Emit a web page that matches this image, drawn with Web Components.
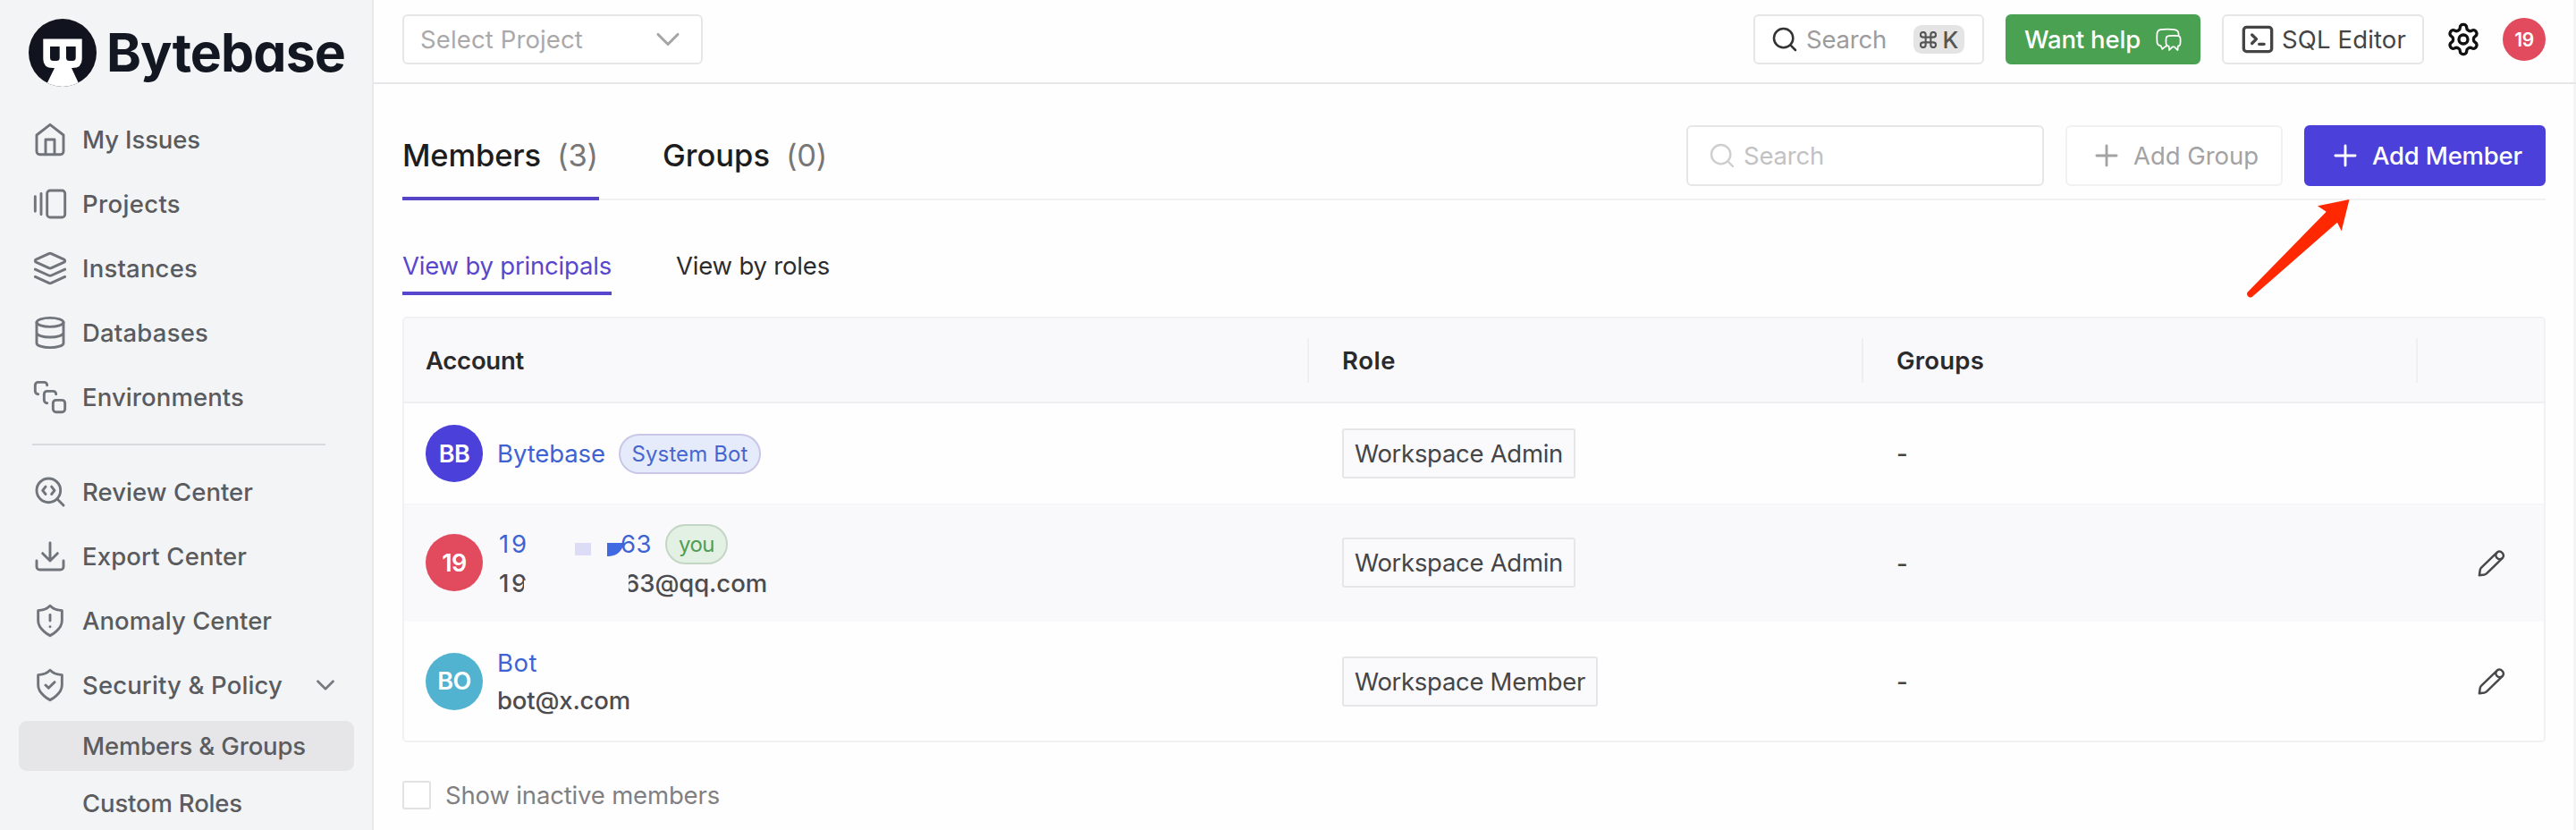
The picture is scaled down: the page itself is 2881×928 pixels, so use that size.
<!DOCTYPE html>
<html lang="en">
<head>
<meta charset="utf-8">
<title>Bytebase - Members &amp; Groups</title>
<style>
  html, body { margin: 0; padding: 0; }
  body { width: 2881px; height: 928px; overflow: hidden; background: #fefefe; font-family: Inter, "Liberation Sans", sans-serif; font-size: 27.5px; font-weight: 430; color: #333; }
</style>
</head>
<body>
<bb-app></bb-app>
<script>
const ICONS = {
  home: '<path d="m3 9 9-7 9 7v11a2 2 0 0 1-2 2H5a2 2 0 0 1-2-2z"/><path d="M9 22V12h6v10"/>',
  projects: '<path d="M2 7v10M6 5v14"/><rect width="12" height="18" x="10" y="3" rx="2"/>',
  layers: '<path d="M12.83 2.18a2 2 0 0 0-1.66 0L2.6 6.08a1 1 0 0 0 0 1.83l8.58 3.91a2 2 0 0 0 1.66 0l8.58-3.9a1 1 0 0 0 0-1.83Z"/><path d="m22 12.65-9.17 4.16a2 2 0 0 1-1.66 0L2 12.65M22 17.65l-9.17 4.16a2 2 0 0 1-1.66 0L2 17.65"/>',
  database: '<ellipse cx="12" cy="5" rx="9" ry="3"/><path d="M3 5V19A9 3 0 0 0 21 19V5M3 12A9 3 0 0 0 21 12"/>',
  stack: '<path d="M4 10c-1.1 0-2-.9-2-2V4c0-1.1.9-2 2-2h4c1.1 0 2 .9 2 2M10 16c-1.1 0-2-.9-2-2v-4c0-1.1.9-2 2-2h4c1.1 0 2 .9 2 2"/><rect width="8" height="8" x="14" y="14" rx="2"/>',
  review: '<path d="m13 13.5 2-2.5-2-2.5M21 21l-4.3-4.3M9 8.5 7 11l2 2.5"/><circle cx="11" cy="11" r="8"/>',
  download: '<path d="M21 15v4a2 2 0 0 1-2 2H5a2 2 0 0 1-2-2v-4M7 10l5 5 5-5M12 15V3"/>',
  anomaly: '<path d="M12 22s8-4 8-10V5.2l-1-.2c-2.6 0-5.200-1.200-7-3-1.800 1.800-4.400 3-7 3l-1 .2V12c0 6 8 10 8 10M12 8v4M12 16h.01"/>',
  shield: '<path d="M12 22s8-4 8-10V5.2l-1-.2c-2.6 0-5.200-1.200-7-3-1.800 1.800-4.400 3-7 3l-1 .2V12c0 6 8 10 8 10M9 12l2 2 4-4"/>',
  chevron: '<path d="m6 9 6 6 6-6"/>',
  search: '<circle cx="11" cy="11" r="8"/><path d="m21 21-4.200-4.200"/>',
  plus: '<path d="M5 12h14M12 5v14"/>',
  gear: '<path d="M12.22 2h-.44a2 2 0 0 0-2 2v.18a2 2 0 0 1-1 1.73l-.43.25a2 2 0 0 1-2 0l-.15-.08a2 2 0 0 0-2.73.73l-.22.38a2 2 0 0 0 .73 2.73l.15.1a2 2 0 0 1 1 1.72v.51a2 2 0 0 1-1 1.74l-.15.09a2 2 0 0 0-.73 2.73l.22.38a2 2 0 0 0 2.73.73l.15-.08a2 2 0 0 1 2 0l.43.25a2 2 0 0 1 1 1.73V20a2 2 0 0 0 2 2h.44a2 2 0 0 0 2-2v-.18a2 2 0 0 1 1-1.73l.43-.25a2 2 0 0 1 2 0l.15.08a2 2 0 0 0 2.73-.73l.22-.39a2 2 0 0 0-.73-2.73l-.15-.08a2 2 0 0 1-1-1.74v-.5a2 2 0 0 1 1-1.74l.15-.09a2 2 0 0 0 .73-2.73l-.22-.38a2 2 0 0 0-2.73-.73l-.15.08a2 2 0 0 1-2 0l-.43-.25a2 2 0 0 1-1-1.73V4a2 2 0 0 0-2-2z"/><circle cx="12" cy="12" r="3"/>',
  terminal: '<rect x="2.6" y="3.800" width="18.800" height="16.400" rx="2"/><path d="m8.200 9 2.900 2.800-2.900 2.900M13 15.200h3.300"/>',
  chat: '<g transform="translate(0 1.200) scale(.8333)" stroke-width="1.700"><path d="M5.500 19.500H5.200Q1.800 18.800 1.500 15.800Q1 10.500 1.500 5.700Q2 2.300 5.400 1.700Q13 .6 20.600 1.700Q24.800 2.300 25.200 5.500L25.500 7.600M5.500 19.500 7.300 23.300 10.800 20.300H11.500"/><path d="M14.300 8.600Q19.500 8 24.700 8.600Q27.200 9 27.300 11.300Q27.600 14.500 27.200 17.500Q26.800 19.900 24.600 20.100L24.400 24.400 20.600 20.700H18.600L15 24.400 14.600 20.100Q11.900 19.900 11.500 17.500Q11.200 14.500 11.500 11.300Q11.700 9 14.300 8.600Z"/></g>',
  pencil: '<g transform="scale(.8)" stroke-width="2.400"><path d="M1.800 28.300 2.700 22.300Q3 21 4 20L21.300 3.200A4.400 4.400 0 0 1 27.300 9.200L9.800 26.300Q8.800 27.200 7.500 27.500ZM21 3.800A3.600 3.600 0 0 0 26.800 9.600"/></g>'
};

function define(name, css, html, after) {
  const tpl = document.createElement('template');
  tpl.innerHTML = `<style>:host{box-sizing:border-box}*{box-sizing:border-box}${css}</style>${html}`;
  customElements.define(name, class extends HTMLElement {
    connectedCallback() {
      if (this.shadowRoot) return;
      this.attachShadow({ mode: 'open' }).appendChild(tpl.content.cloneNode(true));
      if (after) after.call(this, this.shadowRoot);
    }
  });
}

/* Stroked icon: name, size (px), stroke (24-unit grid) */
define('bb-icon', ':host{display:block;flex:none;line-height:0}svg{display:block;fill:none;stroke:currentColor;stroke-linecap:round;stroke-linejoin:round;overflow:visible}',
  '<svg viewBox="0 0 24 24"></svg>', function (root) {
    const s = root.querySelector('svg'), size = this.getAttribute('size') || 40;
    s.setAttribute('width', size); s.setAttribute('height', size);
    s.setAttribute('stroke-width', this.getAttribute('stroke') || 1.5);
    s.innerHTML = ICONS[this.getAttribute('name')];
  });

/* Single line of text tracked to an exact advance width */
define('bb-text', ':host{display:block;flex:none;white-space:pre}span{display:inline-block}', '<span><slot></slot></span>', function (root) {
  const want = +this.getAttribute('w'), span = root.querySelector('span');
  if (!want) return;
  this.style.width = want + 'px';
  const n = this.textContent.length;
  this.style.letterSpacing = ((want - span.getBoundingClientRect().width) / n).toFixed(3) + 'px';
});

define('bb-avatar', ':host{display:flex;flex:none;align-items:center;justify-content:center;width:64px;height:64px;border-radius:50%;color:#fff;font-size:27px;font-weight:600;letter-spacing:-.5px}:host([small]){width:48px;height:48px;font-size:21px}', '<slot></slot>');

define('bb-logo', ':host{display:flex;align-items:center;height:120px;padding:0 0 3px 31px}svg{display:block;flex:none;margin-right:10px}bb-text{font-size:59px;line-height:76px;font-weight:700;color:#131722;font-feature-settings:"cv11"}',
  `<svg width="78" height="78" viewBox="31 20.5 78 78"><defs><clipPath id="c"><circle cx="70" cy="59.5" r="38"/></clipPath></defs>
   <circle cx="70" cy="59.5" r="38" fill="#11141f"/>
   <g clip-path="url(#c)"><path fill="#fff" d="M48.300 44H91.700V66.500Q91.700 76.500 81 76.500H80L90 98H50.500L61 76.500H59Q48.300 76.500 48.300 66.500Z"/></g>
   <path fill="#11141f" d="M56 52.500h10.700v12.500q0 3.500-3.500 3.500h-3.700q-3.500 0-3.500-3.500zM74 52.500h10.700v12.500q0 3.500-3.500 3.500h-3.700q-3.500 0-3.500-3.500z"/></svg>
   <bb-text w="267">Bytebase</bb-text>`);

define('bb-nav-item', ':host{display:flex;align-items:center;height:72px;padding-left:36px;font-weight:530;color:#5a5b5e}bb-icon{color:#70747b;margin-right:16px}slot[name=end]{display:block}',
  '<bb-icon size="40"></bb-icon><slot></slot><slot name="end"></slot>', function (root) {
    const old = root.querySelector('bb-icon'), ic = document.createElement('bb-icon');
    ic.setAttribute('name', this.getAttribute('icon')); ic.setAttribute('stroke', '1.75');
    old.replaceWith(ic);
  });
define('bb-sub-item', ':host{display:flex;align-items:center;height:56px;margin:4px 20px 0 21px;padding-left:71px;border-radius:9px;color:#5c5c5f;font-weight:470}:host([active]){background:#e6e6e8}:host(:not([active])){margin-top:8px}', '<slot></slot>');

define('bb-sidebar', ':host{display:block;width:418px;height:928px;flex:none;background:#f3f4f6;border-right:2px solid #e8e9ec;overflow:hidden}hr{border:0;height:2px;margin:16px 52px 16px 36px;background:#d9dadd}.chev{margin-left:31px;color:#77797e}',
  `<bb-logo></bb-logo>
  <bb-nav-item icon="home"><bb-text w="132">My Issues</bb-text></bb-nav-item>
  <bb-nav-item icon="projects"><bb-text w="110">Projects</bb-text></bb-nav-item>
  <bb-nav-item icon="layers"><bb-text w="129">Instances</bb-text></bb-nav-item>
  <bb-nav-item icon="database"><bb-text w="141">Databases</bb-text></bb-nav-item>
  <bb-nav-item icon="stack"><bb-text w="181">Environments</bb-text></bb-nav-item>
  <hr>
  <bb-nav-item icon="review"><bb-text w="191">Review Center</bb-text></bb-nav-item>
  <bb-nav-item icon="download"><bb-text w="184">Export Center</bb-text></bb-nav-item>
  <bb-nav-item icon="anomaly"><bb-text w="212">Anomaly Center</bb-text></bb-nav-item>
  <bb-nav-item icon="shield"><bb-text w="224">Security &amp; Policy</bb-text><bb-icon class="chev" slot="end" name="chevron" size="34" stroke="1.9"></bb-icon></bb-nav-item>
  <bb-sub-item active><bb-text w="250">Members &amp; Groups</bb-text></bb-sub-item>
  <bb-sub-item><bb-text w="179">Custom Roles</bb-text></bb-sub-item>`);

define('bb-button', ':host{display:flex;flex:none;align-items:center;height:56px;border:2px solid #e6e6e8;border-radius:6px;background:#fff}', '<slot></slot>');

define('bb-topbar', `:host{display:flex;align-items:center;height:94px;padding:0 34px 4px 32px;border-bottom:2px solid #e6e7e9;gap:24px}
  .grow{flex:1}.select{width:336px;padding-left:18px;color:#a9a9ab}.select bb-icon{margin-left:73px;color:#a6a6a8}
  .search{width:258px;padding-left:17px;color:#9c9c9e}.search bb-icon{color:#333;margin-right:8px}
  kbd{display:flex;align-items:center;justify-content:center;width:57px;height:32px;margin-left:30px;border-radius:9px;background:#e4e4e5;color:#555;font:450 26px Inter,sans-serif;gap:7px}kbd svg{display:block}
  .help{width:218px;background:#4aa152;border-color:#4aa152;color:#fff;padding-left:19px;font-weight:500}.help bb-icon{margin-left:17px}
  .sql{width:226px;padding-left:18px;color:#444}.sql bb-icon{margin-right:7px}.gear{color:#111}`,
  `<bb-button class="select"><bb-text w="182">Select Project</bb-text><bb-icon name="chevron" size="44" stroke="1.7"></bb-icon></bb-button>
  <div class="grow"></div>
  <bb-button class="search"><bb-icon name="search" size="32" stroke="1.9"></bb-icon><bb-text w="90">Search</bb-text><kbd><svg width="19" height="19" viewBox="2 2 20 20" fill="none" stroke="currentColor" stroke-width="2.2"><path d="M15 6v12a3 3 0 1 0 3-3H6a3 3 0 1 0 3 3V6a3 3 0 1 0-3 3h12a3 3 0 1 0-3-3"/></svg><span>K</span></kbd></bb-button>
  <bb-button class="help"><bb-text w="130">Want help</bb-text><bb-icon name="chat" size="29"></bb-icon></bb-button>
  <bb-button class="sql"><bb-icon name="terminal" size="40" stroke="2"></bb-icon><bb-text w="139">SQL Editor</bb-text></bb-button>
  <bb-icon class="gear" name="gear" size="40" stroke="2"></bb-icon>
  <bb-avatar small style="background:#e24a5e">19</bb-avatar>`);

define('bb-toolbar', `:host{display:flex;align-items:flex-end;height:130px;margin:0 34px 0 32px;border-bottom:2px solid #f1f1f3}
  .tab{display:flex;align-items:center;height:102px;padding-top:5px;font-size:34.5px;font-weight:540;color:#1d1d20;border-bottom:4px solid transparent;margin-bottom:-2px}
  .tab.on{border-color:#5644c6;width:220px;margin-right:71px}
  .tab bb-text + bb-text{margin-left:18px;font-weight:400;color:#777}
  .grow{flex:1}bb-button{height:68px;margin-bottom:14px}
  .search{width:400px;padding-left:22px;color:#c2c2c4}.search bb-icon{color:#cfcfd1;margin-right:8px}
  .group{width:243px;margin-left:24px;padding-left:25px;border-color:#f1f1f2;color:#a3a3a5}.group bb-icon,.member bb-icon{margin-right:11px}
  .member{width:270px;margin-left:24px;padding-left:25px;background:#4c40db;border-color:#4c40db;color:#fff;font-weight:480}`,
  `<div class="tab on"><bb-text w="155">Members</bb-text><bb-text w="46">(3)</bb-text></div>
  <div class="tab"><bb-text w="120">Groups</bb-text><bb-text w="46">(0)</bb-text></div>
  <div class="grow"></div>
  <bb-button class="search"><bb-icon name="search" size="32" stroke="1.8"></bb-icon><bb-text w="90">Search</bb-text></bb-button>
  <bb-button class="group"><bb-icon name="plus" size="38" stroke="1.8"></bb-icon><bb-text w="140">Add Group</bb-text></bb-button>
  <bb-button class="member"><bb-icon name="plus" size="38" stroke="1.8"></bb-icon><bb-text w="168">Add Member</bb-text></bb-button>`);

define('bb-viewtabs', `:host{display:flex;height:106px;margin:0 32px;gap:72px;color:#2c2c2f}
  .tab{height:106px;display:flex;align-items:flex-end;padding-bottom:10px;border-bottom:4px solid transparent}
  .on{color:#5846cc;border-color:#5846cc}bb-text{line-height:38px}`,
  `<div class="tab on"><bb-text w="234">View by principals</bb-text></div><div class="tab"><bb-text w="172">View by roles</bb-text></div>`);

define('bb-pill', ':host{display:flex;flex:none;align-items:center;justify-content:center;height:45px;border-radius:23px;border:2px solid #c9c6e8;background:#e6ebfb;color:#4667cf;font-size:24px}:host([green]){border-color:#c3d6c4;background:#e3f0e4;color:#509d54}', '<slot></slot>');
define('bb-role', ':host{display:inline-flex;align-items:center;height:56px;padding:0 12px;border:2px solid #e6e6e8;border-radius:3px;background:#fafafc;color:#454548}', '<slot></slot>');

define('bb-row', `:host{display:grid;grid-template-columns:1012px 620px 620px 1fr;height:112px;align-items:center;color:#444;background:#fefefe}
  :host([tall]){height:132px;border-top:2px solid #f6f6f8}:host([shade]){background:#f9f9fb}:host([last]){height:133px}
  .account{display:flex;align-items:center;padding-left:24px}.role,.groups{padding-left:37px;display:flex}.edit{padding-left:67px;color:#48484b}.groups{font-weight:500}`,
  `<div class="account"><slot name="account"></slot></div><div class="role"><slot name="role"></slot></div><div class="groups"><bb-text>-</bb-text></div><div class="edit"><slot name="edit"></slot></div>`);

define('bb-account', `:host{display:flex;align-items:center}.name{display:flex;align-items:center;height:42px;color:#3d63d2}.info{margin-left:16px}`,
  `<slot name="avatar"></slot><div class="info"><div class="name"><slot></slot></div><slot name="mail"></slot></div>`);
define('bb-mail', ':host{display:flex;align-items:center;height:42px;color:#4c4c4f;font-weight:500;position:relative}', '<slot></slot>');

define('bb-table', `:host{display:block;width:2397px;height:476px;margin:24px 0 0 32px;border:2px solid #f1f1f4;border-radius:5px;overflow:hidden}
  .head{display:grid;grid-template-columns:1012px 620px 620px 1fr;height:95px;background:#f9f9fb;border-bottom:2px solid #efeff2;align-items:center;font-weight:570;color:#2a2a2d}
  .head div{height:50px;display:flex;align-items:center;padding-left:37px;border-right:2px solid #efeff2}.head div:first-child{padding-left:24px}.head div:last-child{border:0}
  .chip1{width:18px;height:14px;background:#dcdcf6;margin:12px 18px 0 51px}.chip2{width:18px;height:15px;background:#4169e1;border-radius:0 0 16px 0/0 0 15px 0;margin:12px -3px 0 0}
  .wipe1{position:absolute;left:30px;top:18px;width:9px;height:9px;background:#f9f9fb}.wipe3{position:absolute;left:28px;top:26px;width:9px;height:12px;background:#f9f9fb;transform:skewX(-20deg)}.wipe2{position:absolute;left:134px;top:3px;width:13px;height:38px;background:#f9f9fb}`,
  `<div class="head"><div><bb-text w="110">Account</bb-text></div><div><bb-text w="60">Role</bb-text></div><div><bb-text w="98">Groups</bb-text></div><div></div></div>
  <bb-row>
    <bb-account slot="account"><bb-avatar slot="avatar" style="background:#4c40db">BB</bb-avatar><bb-text w="121">Bytebase</bb-text><bb-pill style="width:159px;margin-left:15px"><bb-text w="130">System Bot</bb-text></bb-pill></bb-account>
    <bb-role slot="role"><bb-text w="233">Workspace Admin</bb-text></bb-role>
  </bb-row>
  <bb-row tall shade>
    <bb-account slot="account" style="margin-top:-2px"><bb-avatar slot="avatar" style="background:#e24a5e">19</bb-avatar><bb-text w="34" style="margin-left:2px">19</bb-text><div class="chip1"></div><div class="chip2"></div><bb-text w="35">63</bb-text><bb-pill green style="width:70px;margin-left:15px"><bb-text w="40">you</bb-text></bb-pill>
      <bb-mail slot="mail" style="top:2px"><bb-text w="34" style="margin-left:2px">19</bb-text><bb-text style="margin-left:106px" w="160">63@qq.com</bb-text><div class="wipe1"></div><div class="wipe3"></div><div class="wipe2"></div></bb-mail></bb-account>
    <bb-role slot="role" style="margin-top:-2px"><bb-text w="233">Workspace Admin</bb-text></bb-role>
    <bb-icon slot="edit" name="pencil" size="31" style="margin-top:-2px"></bb-icon>
  </bb-row>
  <bb-row last>
    <bb-account slot="account"><bb-avatar slot="avatar" style="background:#52b3d0">BO</bb-avatar><bb-text w="45">Bot</bb-text><bb-mail slot="mail"><bb-text w="149">bot@x.com</bb-text></bb-mail></bb-account>
    <bb-role slot="role"><bb-text w="258">Workspace Member</bb-text></bb-role>
    <bb-icon slot="edit" name="pencil" size="31"></bb-icon>
  </bb-row>`);

define('bb-check', ':host{display:flex;align-items:center;gap:16px;margin:43px 0 0 32px;height:32px;color:#808083}.box{width:32px;height:32px;border:2px solid #e2e2e5;border-radius:3px;background:#fff}', '<div class="box"></div><slot></slot>');

define('bb-arrow', ':host{position:absolute;left:2508px;top:218px;width:126px;height:120px}svg{display:block}',
  '<svg width="126" height="120" viewBox="2508 218 126 120"><path fill="#ff2800" d="M2627.500 223 2592 230.300 2601.700 236.700 2513.800 326.500A3.800 3.800 0 0 0 2518.700 332L2614 248.700 2618.700 258.300Z"/></svg>');

define('bb-app', ':host{display:flex;position:relative;width:2881px;height:928px;overflow:hidden}main{flex:1;min-width:0;height:928px;border-right:3px solid #f4f4f5}bb-topbar{margin-right:-3px}bb-toolbar{margin-right:31px}',
  `<bb-sidebar></bb-sidebar><main><bb-topbar></bb-topbar><bb-toolbar></bb-toolbar><bb-viewtabs></bb-viewtabs><bb-table></bb-table><bb-check><bb-text w="307">Show inactive members</bb-text></bb-check></main><bb-arrow></bb-arrow>`);
</script>
</body>
</html>
